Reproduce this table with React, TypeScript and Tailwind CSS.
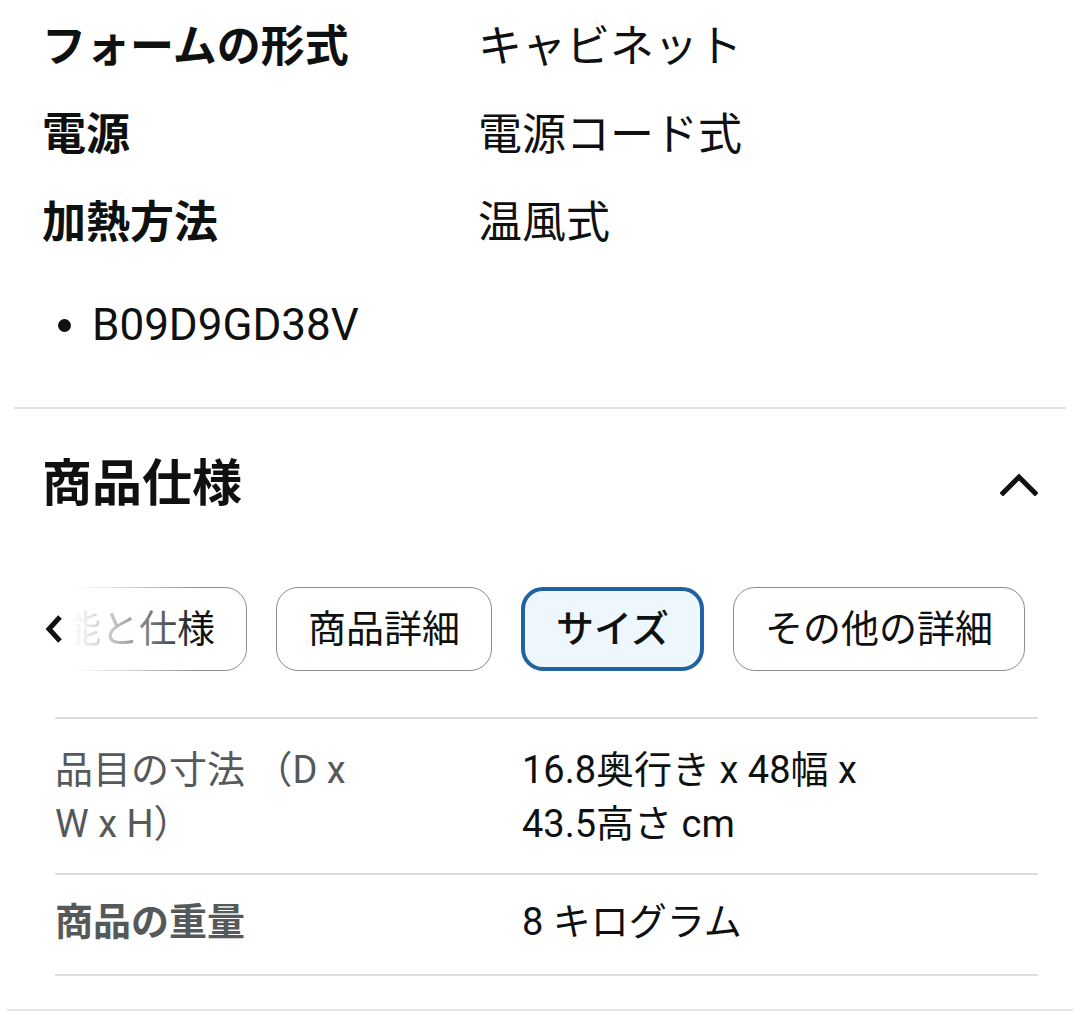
import React from "react";

const font = "font-['Roboto','Noto_Sans_CJK_JP',sans-serif]";

const overview = [
  { label: "フォームの形式", value: "キャビネット" },
  { label: "電源", value: "電源コード式" },
  { label: "加熱方法", value: "温風式" },
];

const tabs = [
  { name: "機能と仕様", active: false },
  { name: "商品詳細", active: false },
  { name: "サイズ", active: true },
  { name: "その他の詳細", active: false },
];

const ChevronUp = () => (
  <svg width="38" height="24" viewBox="0 0 38 24" fill="none">
    <path d="M3 21 L19 5 L35 21" stroke="#0f1111" strokeWidth="5" strokeLinecap="square" />
  </svg>
);

const ChevronLeft = () => (
  <svg width="20" height="30" viewBox="0 0 20 30" fill="none">
    <path d="M16 3 L5 15 L16 27" stroke="#0f1111" strokeWidth="5" />
  </svg>
);

const SpecRow = ({
  label,
  value,
  boldLabel,
  className,
}: {
  label: string;
  value: React.ReactNode;
  boldLabel?: boolean;
  className?: string;
}) => (
  <div className={`flex border-b-2 border-[#dcdcdc] ${className ?? ""}`}>
    <div
      className={`w-[467px] shrink-0 pr-[150px] text-[38px] leading-[54px] text-[#565959] ${
        boldLabel ? "font-bold" : ""
      }`}
    >
      {label}
    </div>
    <div className="flex-1 text-[38px] leading-[54px] text-[#0f1111]">{value}</div>
  </div>
);

export default function App() {
  return (
    <div className={`w-[1080px] h-[1024px] overflow-hidden bg-white text-[#0f1111] ${font}`}>
      <div className="pl-[42px] pt-[3px]">
        {overview.map((row) => (
          <div key={row.label} className="flex h-[88px] items-center text-[44px]">
            <span className="w-[436px] shrink-0 font-bold">{row.label}</span>
            <span>{row.value}</span>
          </div>
        ))}
      </div>

      <ul className="mt-[28px] pl-[58px]">
        <li className="flex items-center h-[60px] text-[44px]">
          <span className="mr-[21px] h-[13px] w-[13px] rounded-full bg-[#0f1111]" />
          B09D9GD38V
        </li>
      </ul>

      <div className="mx-[14px] mt-[52px] h-[2px] bg-[#e3e3e3]" />

      <div className="mt-[45px] flex h-[60px] items-center justify-between pl-[42px] pr-[42px]">
        <h2 className="text-[50px] font-bold">商品仕様</h2>
        <ChevronUp />
      </div>

      <div className="relative ml-[40px] mt-[72px] h-[86px] overflow-hidden">
        <div className="-ml-[47px] flex gap-[29px] pt-[1px]">
          {tabs.map((t) => (
            <div
              key={t.name}
              className={`flex h-[84px] shrink-0 items-center whitespace-nowrap rounded-[22px] px-[31px] text-[38px] ${
                t.active
                  ? "border-[4px] border-[#2162a1] bg-[#edf7fd] font-medium"
                  : "border-[1.5px] border-[#8d8d8d] bg-white"
              }`}
            >
              {t.name}
            </div>
          ))}
        </div>
        <div className="absolute left-0 top-0 h-full w-[160px] bg-linear-to-r from-white from-20% via-white/70 to-transparent" />
        <div className="absolute left-[4px] top-[28px]">
          <ChevronLeft />
        </div>
      </div>

      <div className="ml-[55px] mr-[42px] mt-[45px] border-t-2 border-[#dcdcdc]">
        <SpecRow
          label="品目の寸法 （D x W x H）"
          value={
            <>
              16.8奥行き x 48幅 x
              <br />
              43.5高さ cm
            </>
          }
          className="pt-[24px] pb-[22px]"
        />
        <SpecRow label="商品の重量" value="8 キログラム" boldLabel className="pt-[20px] pb-[25px]" />
      </div>

      <div className="mx-[7px] mt-[33px] h-[2px] bg-[#e3e3e3]" />
    </div>
  );
}
